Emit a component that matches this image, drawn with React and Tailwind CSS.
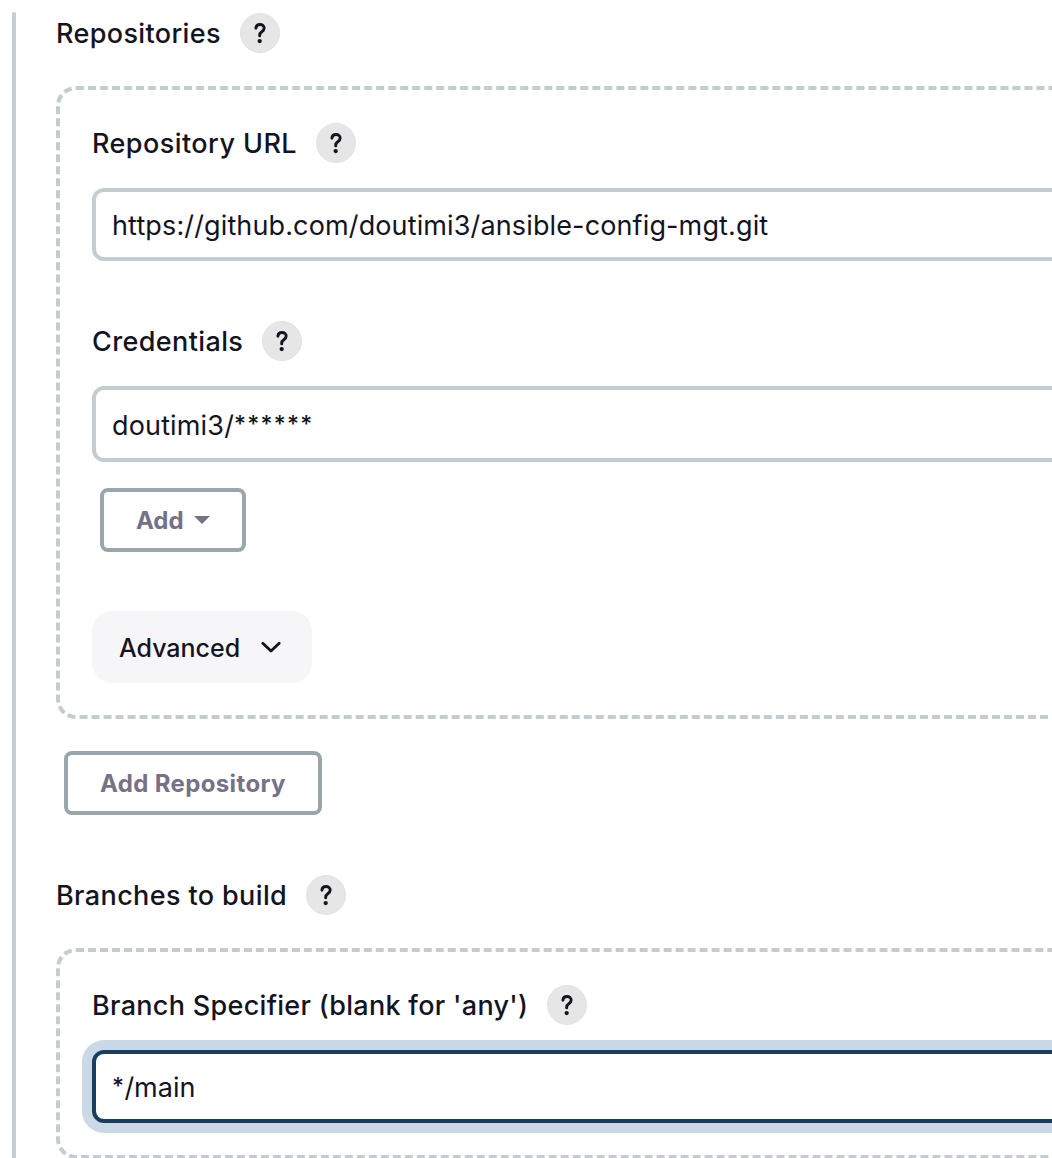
function Help() {
  return (
    <span className="flex size-10 shrink-0 items-center justify-center rounded-full border border-[#e2e2e2] bg-[#e6e6e6]">
      <svg width="38" height="38" viewBox="0 0 38 38" fill="none">
        <path d="M14.9 14.2C15.1 11.9 16.7 10.5 19 10.5C21.5 10.5 23.2 12 23.2 14.1C23.2 15.8 22.3 16.8 20.8 17.8C19.3 18.8 18.7 19.6 18.7 21.2V21.9" stroke="#14141f" strokeWidth="2.9" strokeLinecap="round" strokeLinejoin="round" />
        <circle cx="18.7" cy="27.1" r="2.15" fill="#14141f" />
      </svg>
    </span>
  );
}

function Label({ children, className }) {
  return (
    <div className="flex h-10 items-center">
      <span className={`shrink-0 whitespace-nowrap pt-0.5 text-[27px] font-medium ${className}`}>{children}</span>
      <Help />
    </div>
  );
}

export default function App() {
  return (
    <main className="flex h-[1158px] w-full overflow-hidden bg-white pl-3 pt-3 font-['Inter',sans-serif] text-[#14141f]">
      <div className="w-1 shrink-0 rounded-t-sm bg-[#c3cccf]" />
      <div className="flex w-[1400px] shrink-0 flex-col items-start pl-10 pt-px">
        <Label className="w-[184px] tracking-[0.36px]">Repositories</Label>

        <section className="mt-[33px] h-[633px] w-full shrink-0 rounded-[20px] border-4 border-dashed border-[#c3cccf] px-8 pt-[33px]">
          <Label className="w-[224px] tracking-[0.44px]">Repository URL</Label>
          <div className="mt-[25px] flex h-[73px] items-center rounded-xl border-4 border-[#c3cccf] bg-white px-4 pt-[3px] text-[27px] tracking-[0.13px]">
            <span>https://github.com/doutimi3/ansible-config-mgt.git</span>
          </div>
          <div className="mt-[60px]">
            <Label className="w-[170px] tracking-[0.38px]">Credentials</Label>
          </div>
          <div className="mt-[25px] flex h-[76px] items-center rounded-xl border-4 border-[#c3cccf] bg-white px-4 pt-[5px] text-[27px]">
            <span className="tracking-[0.15px]">doutimi3/</span>
            <span className="pb-1 text-[23px] font-medium tracking-[1.3px]">******</span>
          </div>
          <button className="ml-2 mt-[26px] flex h-16 w-[146px] items-center rounded-lg border-4 border-[#9ba6ac] pl-8 text-2xl font-bold text-[#757187]">
            <span className="pt-0.5">Add</span>
            <svg className="ml-2.5" width="16" height="8" viewBox="0 0 16 8"><path d="M0 0H16L8 8Z" fill="#757187" /></svg>
          </button>
          <button className="mt-[59px] flex h-[72px] w-[220px] items-center rounded-[20px] bg-[#f6f6f9] pl-[27px] text-[25px] font-medium">
            <span className="pt-[3px]">Advanced</span>
            <svg className="ml-5" width="22" height="16" viewBox="0 0 22 16" fill="none"><path d="M2.8 4.2L11 12L19.2 4.2" stroke="#14141f" strokeWidth="2.9" strokeLinecap="round" strokeLinejoin="round" /></svg>
          </button>
        </section>

        <button className="ml-2 mt-8 flex h-16 w-[258px] shrink-0 items-center rounded-lg border-4 border-[#9ba6ac] pl-8 text-2xl font-bold tracking-[0.36px] text-[#757187]">
          <span className="pt-0.5">Add Repository</span>
        </button>

        <div className="mt-[60px]">
          <Label className="w-[250px] tracking-[0.38px]">Branches to build</Label>
        </div>

        <section className="mt-[33px] h-[211px] w-full shrink-0 rounded-[20px] border-4 border-dashed border-[#c3cccf] px-8 pt-[33px]">
          <Label className="w-[455px] tracking-[0.3px]">Branch Specifier (blank for 'any')</Label>
          <div className="mt-[25px] flex h-[73px] items-center rounded-xl border-4 border-[#1a3f5e] bg-white px-4 pt-[3px] text-[27px] ring-10 ring-[#cbd8e5]">
            <span className="pb-1 text-[23px] font-medium tracking-[0.4px]">*</span>
            <span>/main</span>
          </div>
        </section>
      </div>
    </main>
  );
}
